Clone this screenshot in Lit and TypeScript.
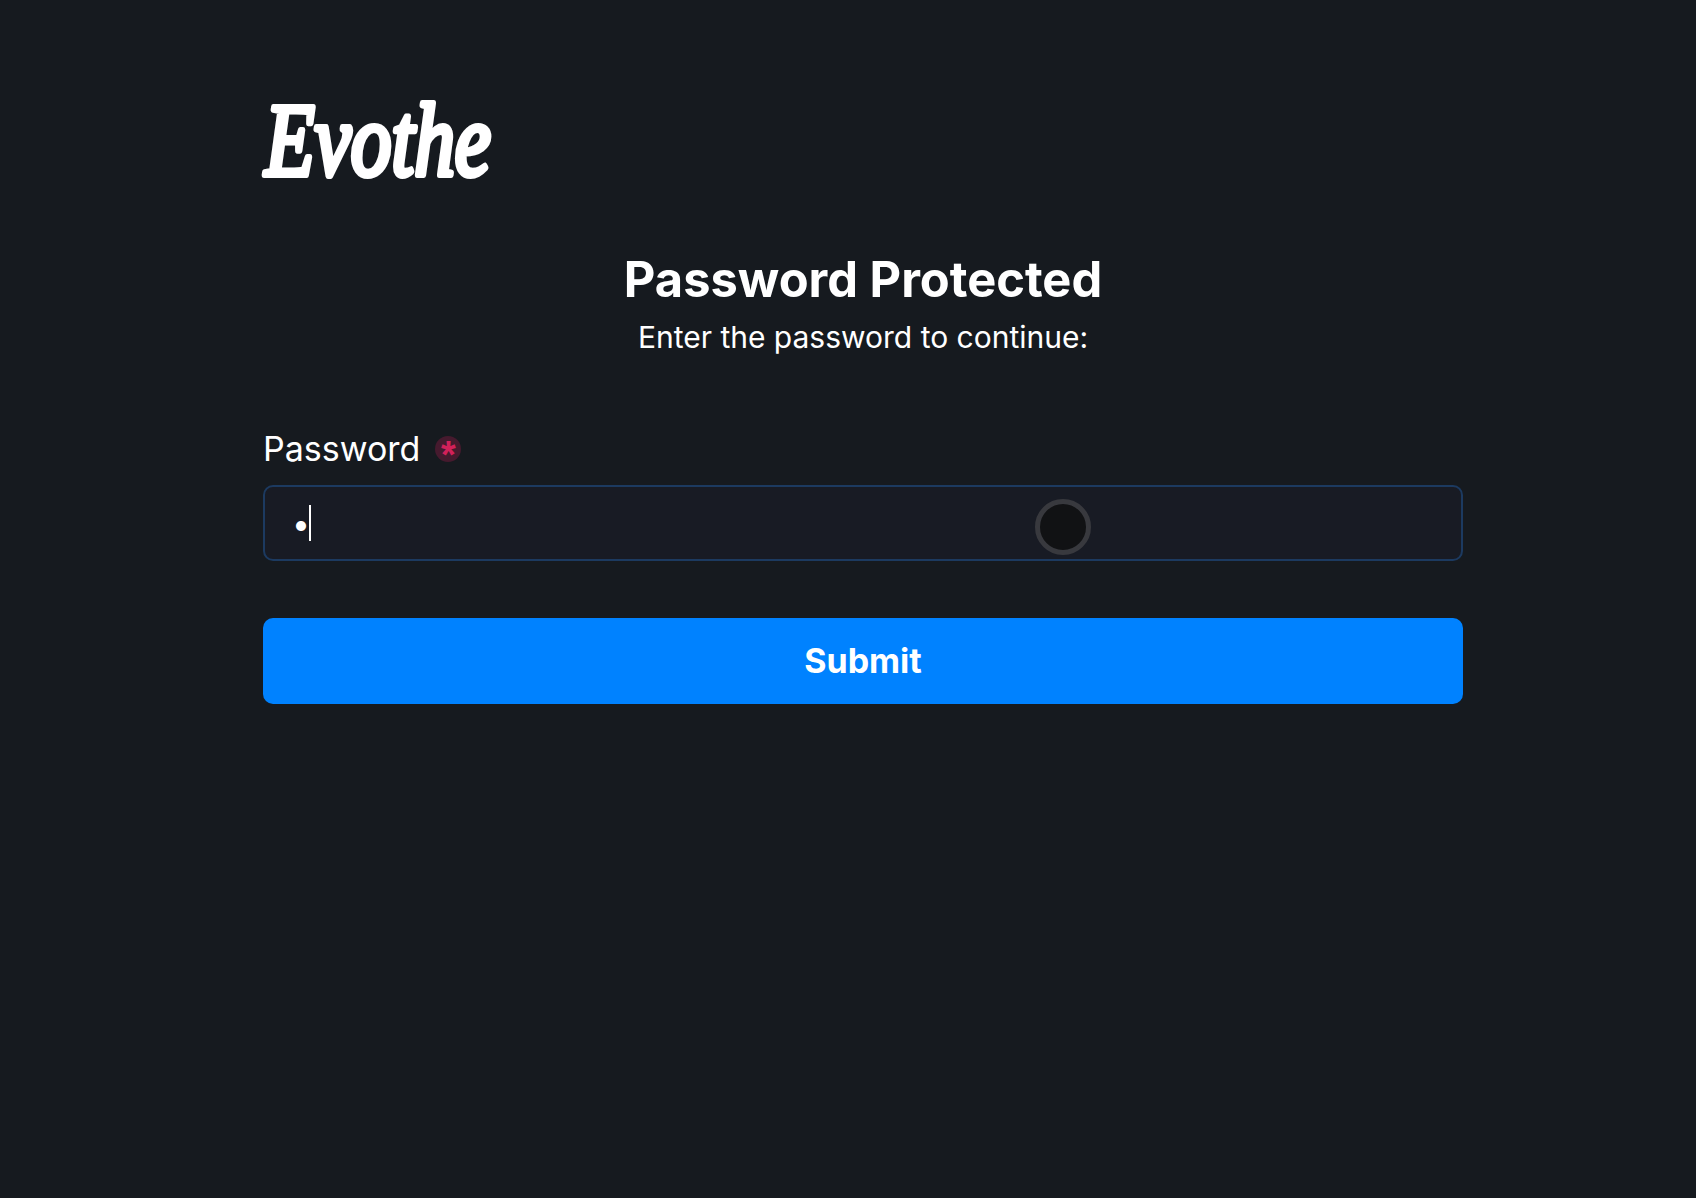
import { LitElement, html, css } from "lit";
import { customElement } from "lit/decorators.js";

@customElement("app-root")
export class AppRoot extends LitElement {
  static styles = css`
    :host {
      display: block;
      min-height: 1198px;
      background: #161a1f;
      color: #fff;
      font-family: Inter, "Liberation Sans", sans-serif;
      box-sizing: border-box;
      padding: 92px 233px 0 263px;
    }
    .logo {
      display: block;
      width: 240px;
      height: 92px;
      overflow: visible;
    }
    .logo text {
      font-family: "Liberation Serif", serif;
      font-style: italic;
      font-weight: 400;
      font-size: 104px;
      fill: #fff;
      stroke: #fff;
      stroke-width: 6px;
      stroke-linejoin: round;
      stroke-linecap: round;
    }
    .intro {
      margin-top: 67px;
      text-align: center;
    }
    h1 {
      margin: 0;
      font-size: 48.8px;
      line-height: 58px;
      font-weight: 700;
    }
    .intro p {
      margin: 8px 0 0;
      font-size: 30px;
      line-height: 40px;
    }
    .label {
      margin-top: 70px;
      display: flex;
      align-items: center;
      gap: 15px;
      font-size: 34px;
      line-height: 44px;
    }
    .req {
      width: 26px;
      height: 26px;
      border-radius: 50%;
      background: #461a2e;
      display: flex;
      justify-content: center;
      color: #d2215a;
      font-family: "Liberation Sans", sans-serif;
      font-size: 38px;
      font-weight: 700;
      line-height: 38px;
    }
    .field {
      position: relative;
      margin-top: 14px;
      box-sizing: border-box;
      height: 76px;
      padding: 0 27px;
      display: flex;
      align-items: center;
      background: #181b24;
      border: 2px solid #1c3a60;
      border-radius: 10px;
      font-size: 32px;
    }
    .caret {
      width: 2px;
      height: 36px;
      background: #fff;
      margin-left: -1px;
    }
    .pointer {
      position: absolute;
      left: 770px;
      top: 12px;
      width: 56px;
      height: 56px;
      box-sizing: border-box;
      border-radius: 50%;
      background: #111214;
      border: 5px solid #38393e;
    }
    button {
      display: block;
      width: 100%;
      margin-top: 57px;
      height: 86px;
      border: 0;
      border-radius: 10px;
      background: #0082ff;
      color: #fff;
      font: 700 34px/1 Inter, "Liberation Sans", sans-serif;
    }
  `;

  render() {
    return html`
      <svg class="logo" viewBox="0 0 240 92" role="img" aria-label="Evothe">
        <text x="2" y="83" textLength="226" lengthAdjust="spacingAndGlyphs">Evothe</text>
      </svg>
      <div class="intro">
        <h1>Password Protected</h1>
        <p>Enter the password to continue:</p>
      </div>
      <div class="label">Password <span class="req">*</span></div>
      <div class="field">
        <span>•</span><span class="caret"></span>
        <span class="pointer"></span>
      </div>
      <button>Submit</button>
    `;
  }
}
